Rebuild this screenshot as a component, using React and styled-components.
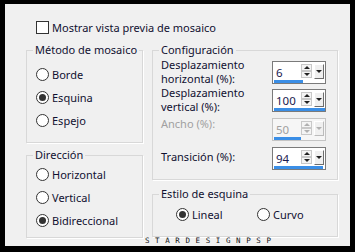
import React from "react";
import styled, { createGlobalStyle } from "styled-components";

const Global = createGlobalStyle`
  html, body {
    margin: 0;
    background: #000;
  }
  body {
    width: 355px;
    height: 252px;
    overflow: hidden;
    font-family: "Noto Sans", "Open Sans", sans-serif;
  }
`;

const Dialog = styled.div`
  position: relative;
  box-sizing: border-box;
  margin: 4px 0 0 5px;
  width: 345px;
  height: 242px;
  background: #f0f0f0;
  padding: 16px 0 0 21px;
  font-size: 11px;
  color: #101030;
`;

const CheckRow = styled.label`
  display: flex;
  align-items: center;
  gap: 3px;
  height: 14px;
  margin-left: 10px;
`;

const CheckBox = styled.span`
  box-sizing: border-box;
  width: 13px;
  height: 13px;
  border: 1px solid #333;
  background: #fff;
`;

const Columns = styled.div`
  display: flex;
  gap: 9px;
  margin-top: 8px;
`;

const Column = styled.div`
  display: flex;
  flex-direction: column;
  width: ${(p) => p.$w}px;
  gap: ${(p) => p.$gap}px;
`;

const Group = styled.fieldset`
  box-sizing: border-box;
  margin: 0;
  padding: 0;
  min-width: 0;
  height: ${(p) => p.$h}px;
  border: 1px solid #d8d8d8;
  box-shadow: 1px 1px 0 #fff;
`;

const Legend = styled.legend`
  margin-left: 6px;
  padding: 0 2px;
  line-height: 16px;
`;

const Body = styled.div`
  padding: ${(p) => p.$pad};
  display: flex;
  flex-direction: ${(p) => (p.$row ? "row" : "column")};
`;

const RadioRow = styled.label`
  display: flex;
  align-items: center;
  gap: 3px;
  height: 23px;
  width: ${(p) => (p.$w ? `${p.$w}px` : "auto")};
`;

const Radio = styled.span`
  box-sizing: border-box;
  width: 13px;
  height: 13px;
  border-radius: 50%;
  border: 1px solid #333;
  background: #fff;
  display: flex;
  align-items: center;
  justify-content: center;
  &::after {
    content: "";
    width: 7px;
    height: 7px;
    border-radius: 50%;
    background: ${(p) => (p.$on ? "#333" : "transparent")};
  }
`;

const Field = styled.div`
  display: flex;
  justify-content: space-between;
  align-items: flex-start;
  height: 23px;
  margin-bottom: ${(p) => p.$mb}px;
`;

const FieldLabel = styled.div`
  line-height: 14px;
  margin-top: ${(p) => p.$top}px;
  color: ${(p) => (p.$disabled ? "#a0a0a0" : "inherit")};
`;

const Spin = styled.div`
  box-sizing: border-box;
  width: 54px;
  height: 23px;
  border: 1px solid ${(p) => (p.$disabled ? "#c4c4c4" : "#7a7a7a")};
  background: ${(p) => (p.$disabled ? "#f6f6f6" : "#fff")};
  display: flex;
  flex-direction: column;
`;

const SpinTop = styled.div`
  flex: 1;
  display: flex;
  align-items: center;
`;

const Value = styled.span`
  flex: 1;
  padding: 3px 0 0 3px;
  font-size: 11.5px;
  color: ${(p) => (p.$disabled ? "#a0a0a0" : "#1a1a50")};
`;

const Arrows = styled.div`
  display: flex;
  flex-direction: column;
  width: 11px;
  margin-right: 2px;
`;

const ArrowHalf = styled.span`
  box-sizing: border-box;
  height: 7px;
  border: 1px solid #c8c8c8;
  background: #f4f4f4;
  display: flex;
  align-items: center;
  justify-content: center;
  &::after {
    content: "";
    border-left: 3px solid transparent;
    border-right: 3px solid transparent;
    ${(p) => (p.$down ? "border-top" : "border-bottom")}: 3px solid
      ${(p) => (p.$disabled ? "#b0b0b0" : "#222")};
  }
`;

const Drop = styled.span`
  box-sizing: border-box;
  width: 10px;
  height: 15px;
  margin-right: 1px;
  border-top: 1px solid #fff;
  border-left: 1px solid #fff;
  border-right: 1px solid ${(p) => (p.$disabled ? "#bbb" : "#6d6d6d")};
  border-bottom: 1px solid ${(p) => (p.$disabled ? "#bbb" : "#6d6d6d")};
  background: #f0f0f0;
  display: flex;
  align-items: center;
  justify-content: center;
  &::after {
    content: "";
    border-left: 3px solid transparent;
    border-right: 3px solid transparent;
    border-top: 3px solid ${(p) => (p.$disabled ? "#b0b0b0" : "#222")};
  }
`;

const Bar = styled.div`
  height: 3px;
  margin-left: 1px;
  background: #3a8ee6;
`;

const Watermark = styled.div`
  position: absolute;
  left: 140px;
  top: 232px;
  font-family: "DejaVu Sans Mono", monospace;
  font-size: 7.5px;
  line-height: 9px;
  letter-spacing: 5.6px;
  color: #111;
`;

const SpinBox = ({ value, bar, disabled }) => (
  <Spin $disabled={disabled}>
    <SpinTop>
      <Value $disabled={disabled}>{value}</Value>
      <Arrows>
        <ArrowHalf $disabled={disabled} />
        <ArrowHalf $down $disabled={disabled} />
      </Arrows>
      <Drop $disabled={disabled} />
    </SpinTop>
    <Bar style={{ width: bar }} />
  </Spin>
);

const fields = [
  { label: ["Desplazamiento", "horizontal (%):"], value: "6", bar: 29, top: -3 },
  { label: ["Desplazamiento", "vertical (%):"], value: "100", bar: 51, top: -3 },
  { label: ["Ancho (%):"], value: "50", bar: 27, top: -1, disabled: true },
  { label: ["Transición (%):"], value: "94", bar: 49, top: 3 },
];

export default function App() {
  return (
    <>
      <Global />
      <Dialog>
        <CheckRow>
          <CheckBox />
          Mostrar vista previa de mosaico
        </CheckRow>
        <Columns>
          <Column $w={117} $gap={4}>
            <Group $h={101}>
              <Legend>Método de mosaico</Legend>
              <Body $pad="5px 0 0 9px">
                <RadioRow><Radio />Borde</RadioRow>
                <RadioRow><Radio $on />Esquina</RadioRow>
                <RadioRow><Radio />Espejo</RadioRow>
              </Body>
            </Group>
            <Group $h={91}>
              <Legend>Dirección</Legend>
              <Body $pad="0 0 0 9px">
                <RadioRow><Radio />Horizontal</RadioRow>
                <RadioRow><Radio />Vertical</RadioRow>
                <RadioRow><Radio $on />Bidireccional</RadioRow>
              </Body>
            </Group>
          </Column>
          <Column $w={186} $gap={6}>
            <Group $h={138}>
              <Legend>Configuración</Legend>
              <Body $pad="3px 11px 0 8px">
                {fields.map((f, i) => (
                  <Field key={i} $mb={i === 0 ? 5 : 6}>
                    <FieldLabel $top={f.top} $disabled={f.disabled}>
                      {f.label.map((l) => (
                        <div key={l}>{l}</div>
                      ))}
                    </FieldLabel>
                    <SpinBox value={f.value} bar={f.bar} disabled={f.disabled} />
                  </Field>
                ))}
              </Body>
            </Group>
            <Group $h={51}>
              <Legend>Estilo de esquina</Legend>
              <Body $row $pad="1px 0 0 23px">
                <RadioRow $w={81}><Radio $on />Lineal</RadioRow>
                <RadioRow><Radio />Curvo</RadioRow>
              </Body>
            </Group>
          </Column>
        </Columns>
        <Watermark>STARDESIGNPSP</Watermark>
      </Dialog>
    </>
  );
}
